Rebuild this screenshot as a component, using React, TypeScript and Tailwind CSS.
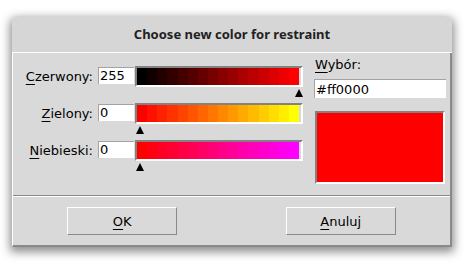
import React from "react";

const STEPS = Array.from({ length: 16 }, (_, i) => i * 17);

function hex2(n: number) {
  return n.toString(16).padStart(2, "0");
}

function Marker({ value }: { value: number }) {
  const left = 1 + Math.round((value / 255) * 159);
  return (
    <div className="h-[8px] mt-[2px] w-[168px] flex">
      <svg width="8" height="8" viewBox="0 0 8 8" style={{ marginLeft: left }}>
        <polygon points="4,0 8,8 0,8" fill="#000" />
      </svg>
    </div>
  );
}

function Bar({ colors }: { colors: string[] }) {
  return (
    <div className="w-[168px] h-[21px] border-t-2 border-l-2 border-[#828282] border-b-2 border-r-2 border-b-white border-r-white flex bg-[#d9d9d9]">
      <div className="w-[162px] h-full flex">
        {colors.map((c, i) => (
          <div key={i} className="flex-1 h-full" style={{ backgroundColor: c }} />
        ))}
      </div>
    </div>
  );
}

function Row({
  label,
  mnemonic,
  rest,
  value,
  colors,
}: {
  label: string;
  mnemonic: string;
  rest: string;
  value: number;
  colors: string[];
}) {
  return (
    <div className="h-[37px] flex items-start">
      <div className="w-[80px] text-right leading-[17px] mt-[2px]">
        <span className="underline underline-offset-[3px] decoration-1">{mnemonic}</span>
        {rest}
      </div>
      <div className="ml-[5px] mt-[1px] w-[36px] h-[17px] bg-white border-t border-l border-[#a3a3a3] pl-[1px] leading-[16px]">
        {label}
      </div>
      <div className="ml-[1px] flex flex-col">
        <Bar colors={colors} />
        <Marker value={value} />
      </div>
    </div>
  );
}

export default function App() {
  const red = STEPS.map((v) => `#${hex2(v)}0000`);
  const green = STEPS.map((v) => `#ff${hex2(v)}00`);
  const blue = STEPS.map((v) => `#ff00${hex2(v)}`);
  return (
    <div
      className="w-[467px] h-[269px] bg-white overflow-hidden pt-[17px] pl-[12px] text-[13px] text-black"
      style={{ fontFamily: '"DejaVu Sans", sans-serif' }}
    >
      <div className="w-[440px] h-[230px] rounded-t-[4px] overflow-hidden flex flex-col bg-[#d9d9d9] shadow-[0_3px_10px_2px_rgba(0,0,0,0.45)]">
        <div
          className="h-[35px] bg-[#d6d6d6] flex items-center justify-center font-bold text-[13px] text-[#222]"
          style={{ fontFamily: '"Noto Sans", sans-serif' }}
        >
          Choose new color for restraint
        </div>
        <div className="h-px bg-white" />
        <div className="flex-1 flex flex-col border-l border-l-white border-r-2 border-b-2 border-[#8a8a8a] border-l-white">
          <div className="h-[142px] flex">
            <div className="pt-[13px] flex flex-col">
              <Row label="255" mnemonic="C" rest="zerwony:" value={255} colors={red} />
              <Row label="0" mnemonic="Z" rest="ielony:" value={0} colors={green} />
              <Row label="0" mnemonic="N" rest="iebieski:" value={0} colors={blue} />
            </div>
            <div className="ml-[11px] pt-[3px] flex flex-col w-[132px]">
              <div className="leading-[17px] pl-[1px]">
                <span className="underline underline-offset-[3px] decoration-1">W</span>ybór:
              </div>
              <div className="mt-[6px] h-[19px] bg-white border-t border-l border-[#a3a3a3] pl-[1px] flex items-center leading-[17px]">
                #ff0000
              </div>
              <div className="mt-[13px] ml-[1px] w-[130px] h-[73px] bg-[#ff0000] border-t-2 border-l-2 border-[#828282] border-b-2 border-r-2 border-b-white border-r-white" />
            </div>
          </div>
          <div className="h-px bg-[#8a8a8a]" />
          <div className="h-px bg-white" />
          <div className="flex-1 flex items-center justify-around">
            <div className="w-[110px] h-[28px] border border-white border-r-[#8a8a8a] border-b-[#8a8a8a] flex items-center justify-center leading-[17px]">
              <span className="underline underline-offset-[3px] decoration-1">O</span>K
            </div>
            <div className="w-[110px] h-[28px] border border-white border-r-[#8a8a8a] border-b-[#8a8a8a] flex items-center justify-center leading-[17px]">
              <span className="underline underline-offset-[3px] decoration-1">A</span>nuluj
            </div>
          </div>
        </div>
      </div>
    </div>
  );
}
